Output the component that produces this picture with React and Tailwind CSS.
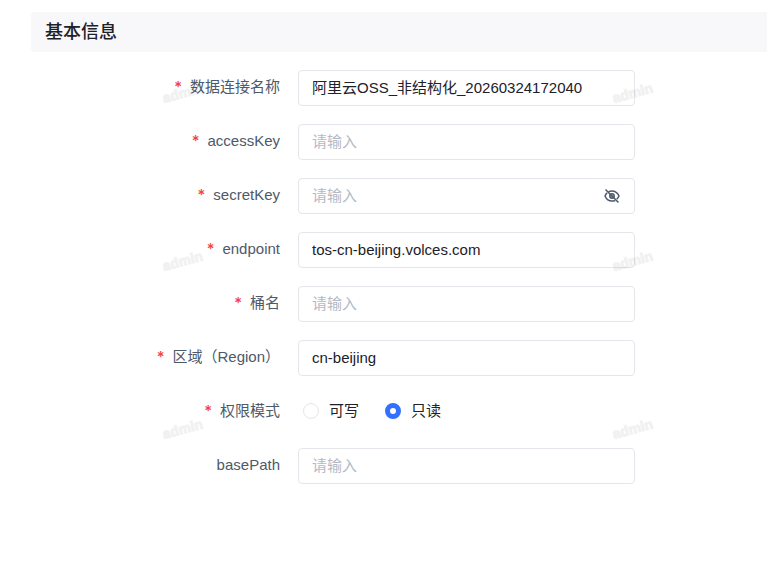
import { useState } from 'react';

const fields = [
  { name: 'connectionName', label: '数据连接名称', required: true, value: '阿里云OSS_非结构化_20260324172040' },
  { name: 'accessKey', label: 'accessKey', required: true, value: '' },
  { name: 'secretKey', label: 'secretKey', required: true, value: '', secret: true },
  { name: 'endpoint', label: 'endpoint', required: true, value: 'tos-cn-beijing.volces.com' },
  { name: 'bucket', label: '桶名', required: true, value: '' },
  { name: 'region', label: '区域（Region）', required: true, value: 'cn-beijing' },
  { name: 'mode', label: '权限模式', required: true, value: 'read', options: [
    { value: 'write', label: '可写' },
    { value: 'read', label: '只读' },
  ] },
  { name: 'basePath', label: 'basePath', required: false, value: '' },
];

const initialValues = Object.fromEntries(fields.map(({ name, value }) => [name, value]));

const EyeOff = () => (
  <svg width="16" height="16" viewBox="0 0 16 16" fill="none" stroke="#4e5969" strokeWidth="1.5">
    <path d="M4.400 3.800C5.500 3.200 6.700 2.900 8 2.900c3.300 0 5.700 2.100 7 5.100-.5 1.200-1.300 2.300-2.300 3.200M11.200 12.500c-1 .4-2 .6-3.200.6-3.300 0-5.700-2.100-7-5.100.5-1.200 1.200-2.200 2.100-3.100" />
    <circle cx="8" cy="8" r="2.200" fill="#4e5969" fillOpacity="0.5" />
    <path d="M1.500 1.500l13 13" />
  </svg>
);

const FieldLabel = ({ required, children, ...props }) => (
  <label {...props} className="flex w-[249px] h-[34px] shrink-0 items-center justify-end gap-2 text-[#4e5969] whitespace-nowrap">
    {required && <span className="font-[Inter,sans-serif] font-medium text-[#f53f3f]">*</span>}
    <span>{children}</span>
  </label>
);

const TextField = ({ field, value, onChange }) => {
  const [visible, setVisible] = useState(false);

  return (
    <div className="flex flex-1 min-w-0 h-9 items-center rounded border border-[#e5e6eb] bg-white pl-[13px] pr-[14px]">
      <input
        id={field.name}
        type={field.secret && !visible ? 'password' : 'text'}
        placeholder="请输入"
        value={value}
        onChange={(e) => onChange(field.name, e.target.value)}
        className="flex-1 min-w-0 bg-transparent text-[#1d2129] placeholder-[#b4bac5] focus:outline-none"
      />
      {field.secret && (
        <button type="button" aria-label="显示或隐藏" onClick={() => setVisible(!visible)}>
          <EyeOff />
        </button>
      )}
    </div>
  );
};

const RadioField = ({ field, value, onChange }) => (
  <div role="radiogroup" aria-labelledby={`${field.name}-label`} className="flex flex-1 h-[34px] mb-0.5 items-center gap-[26px] pl-[5px]">
    {field.options.map((option) => (
      <label key={option.value} className="flex items-center gap-[10px] text-[#1d2129]">
        <input
          type="radio"
          name={field.name}
          value={option.value}
          checked={value === option.value}
          onChange={() => onChange(field.name, option.value)}
          className="size-4 appearance-none rounded-full border border-[#e5e6eb] bg-white checked:border-[5px] checked:border-[#3370ff]"
        />
        {option.label}
      </label>
    ))}
  </div>
);

const Watermark = () => (
  <div className="pointer-events-none absolute inset-x-0 top-0 grid grid-cols-[450px_450px] auto-rows-[168px] pt-[83px] pl-[162px] overflow-hidden text-sm leading-5 font-bold text-black opacity-5">
    {[0, 1, 2, 3, 4, 5].map((i) => (
      <span key={i} className="w-10 h-5 text-center -rotate-15 [-webkit-text-stroke:1px_black]">admin</span>
    ))}
  </div>
);

const App = () => {
  const [values, setValues] = useState(initialValues);

  const handleChange = (name, value) => setValues({ ...values, [name]: value });

  return (
    <main className="relative min-h-screen overflow-hidden bg-white pt-3 pl-[31px] font-['Liberation_Sans','Noto_Sans_CJK_SC',sans-serif] text-[15px]">
      <h2 className="h-10 rounded-l bg-[#f8f8fa] pl-[14px] text-lg leading-10 font-medium text-[#1d2129]">基本信息</h2>
      <form className="mt-[18px] flex flex-col gap-[18px] pr-[132px]">
        {fields.map((field) => (
          <div key={field.name} className="flex gap-[18px]">
            {field.options ? (
              <FieldLabel id={`${field.name}-label`} required={field.required}>{field.label}</FieldLabel>
            ) : (
              <FieldLabel htmlFor={field.name} required={field.required}>{field.label}</FieldLabel>
            )}
            {field.options ? (
              <RadioField field={field} value={values[field.name]} onChange={handleChange} />
            ) : (
              <TextField field={field} value={values[field.name]} onChange={handleChange} />
            )}
          </div>
        ))}
      </form>
      <Watermark />
    </main>
  );
};

export default App;
